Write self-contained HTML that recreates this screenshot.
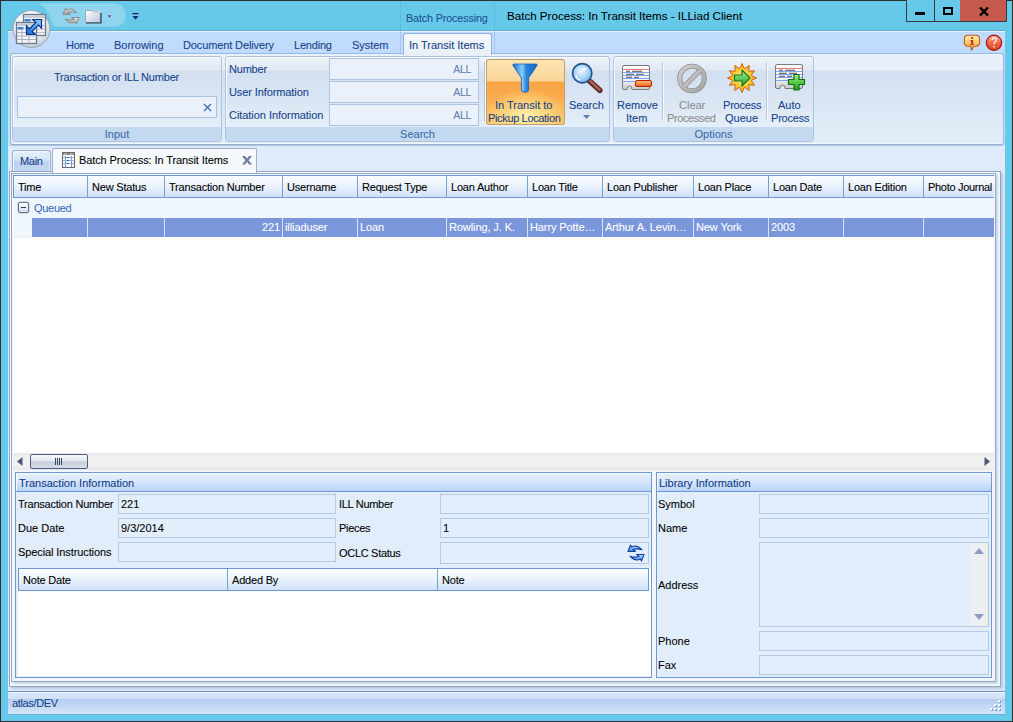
<!DOCTYPE html>
<html><head><meta charset="utf-8">
<style>
*{box-sizing:border-box;margin:0;padding:0}
html,body{width:1013px;height:722px;overflow:hidden}
body{position:relative;background:#67c9ea;font-family:"Liberation Sans",sans-serif;font-size:11px;color:#000;-webkit-text-stroke:0.08px}
.a{position:absolute}
.t{position:absolute;white-space:nowrap;line-height:13px;font-size:11px}
.rb{color:#15428b}
.grp{position:absolute;top:56px;height:86px;border:1px solid #adc3df;border-radius:3px;background:linear-gradient(#eef3f9 0,#dfe8f3 13px,#d3e0f0 14px,#dae6f4 45px,#e6eff9 70px);box-shadow:inset 1px 1px 0 rgba(255,255,255,0.75)}
.glab{position:absolute;left:0;right:0;bottom:0;height:14px;background:#c3d9f0;border-radius:0 0 2px 2px;color:#3e6aaa;text-align:center;line-height:15px;font-size:11px}
.sbox{position:absolute;left:328px;width:150px;height:22px;border:1px solid #adc3df;background:#eaf1fa}
.sall{position:absolute;right:7px;top:4px;color:#5f7fb2;font-size:10.5px;line-height:13px;letter-spacing:-0.3px}
.sep{position:absolute;width:1px;background:#b3c7df;box-shadow:1px 0 0 #f7fafd}
.hdr{position:absolute;height:23px;border:1px solid #6f98d0;border-right:none;background:linear-gradient(#fafcff 0,#ecf3fd 45%,#cfe1fa 100%)}
.hc{position:absolute;top:0;height:21px;border-right:1px solid #76a0d6;line-height:23px;padding-left:4px;font-size:11px;white-space:nowrap;overflow:hidden;letter-spacing:-0.2px}
.cell{position:absolute;top:0;height:19px;border-right:1px solid #d9e2f6;line-height:19px;padding-left:2px;color:#fff;font-size:11px;white-space:nowrap;overflow:hidden;letter-spacing:-0.1px}
.fld{position:absolute;height:20px;border:1px solid #b5c9e4;background:#e3eefc;line-height:18px;padding-left:2px;font-size:11px}
.lab{position:absolute;font-size:11px;line-height:13px;white-space:nowrap}
</style></head><body>
<!-- outer dark border -->
<div class="a" style="left:0;top:0;width:1013px;height:722px;border:1px solid #2e2e2e"></div>

<!-- title bar pill -->
<svg class="a" style="left:30px;top:2px" width="100" height="27" viewBox="0 0 100 27">
 <path d="M10 1.5 H83 Q95.5 1.5 95.5 13.5 Q95.5 24.5 83 24.5 H27 Q23 24.5 22 20 Q18 6 10 1.5Z" fill="#8fd5ee" stroke="#86d0ea" stroke-width="1"/>
</svg>
<svg class="a" style="left:55px;top:3px" width="26" height="24" viewBox="0 0 26 24">
 <defs><linearGradient id="rg1" x1="0" y1="0" x2="0" y2="1"><stop offset="0" stop-color="#e6e6e6"/><stop offset="1" stop-color="#9a9a9a"/></linearGradient></defs>
 <path d="M8 11.5 L10.5 5 L11.5 7 Q17 4 22 9.8 Q17 8 12.8 9.6 L15.5 11.5 Z" fill="url(#rg1)" stroke="#8c8c8c" stroke-width="1" stroke-linejoin="round"/>
 <path d="M24 14.5 L21.5 21 L20.5 19 Q15 22 10 16.2 Q15 18 19.2 16.4 L16.5 14.5 Z" fill="url(#rg1)" stroke="#8c8c8c" stroke-width="1" stroke-linejoin="round"/>
</svg>
<svg class="a" style="left:85px;top:10px" width="17" height="14" viewBox="0 0 17 14">
 <defs><linearGradient id="fo1" x1="0" y1="0" x2="1" y2="1"><stop offset="0" stop-color="#ffffff"/><stop offset="1" stop-color="#b7c3dc"/></linearGradient></defs>
 <path d="M0.5 0.5 H7.5 L8.5 2.5 H15.5 V12.5 H0.5Z" fill="url(#fo1)" stroke="#8e9ab0" stroke-width="0.8"/>
 <rect x="8" y="0.5" width="7.5" height="2.5" fill="#c9cfd9"/>
 <path d="M1 13 H16 V3" fill="none" stroke="#2b3a55" stroke-width="1.2"/>
</svg>
<svg class="a" style="left:106px;top:14px" width="7" height="6" viewBox="0 0 7 6"><path d="M0.5 0.8 H6.5 L3.5 4.8Z" fill="#4a6aa5" stroke="#e8f4fb" stroke-width="0.6"/></svg>
<svg class="a" style="left:132px;top:12px" width="7" height="9" viewBox="0 0 7 9"><rect x="0.5" y="1" width="6" height="1.6" fill="#102f7a"/><path d="M0.2 3.8 H6.8 L3.5 7.8Z" fill="#102f7a"/><path d="M0 3.2 H7" stroke="#fff" stroke-width="0.6"/></svg>
<div class="t" style="left:406px;top:12px;color:#1f4f92;font-size:10.8px;letter-spacing:-0.15px">Batch Processing</div>
<div class="a" style="left:400px;top:30px;width:95px;height:1px;background:#2a4c5e"></div>
<div class="a" style="left:400px;top:1px;width:1px;height:30px;background:#5bbcdc"></div>
<div class="a" style="left:494px;top:1px;width:1px;height:30px;background:#5bbcdc"></div>
<div class="t" style="left:507px;top:9px;font-size:11.6px;color:#000">Batch Process: In Transit Items - ILLiad Client</div>

<!-- window controls -->
<div class="a" style="left:906px;top:0;width:101px;height:22px;background:#67c9ea;border:1px solid #3a3a3a;border-top:none"></div>
<div class="a" style="left:934px;top:0;width:1px;height:21px;background:#3a3a3a"></div>
<div class="a" style="left:960px;top:0;width:46px;height:21px;background:#c65a4f"></div>
<div class="a" style="left:915px;top:12px;width:10px;height:3px;background:#000"></div>
<div class="a" style="left:943px;top:7px;width:10px;height:8px;border:2px solid #000"></div>
<svg class="a" style="left:979px;top:7px" width="10" height="9" viewBox="0 0 10 9"><path d="M1 0.5 L9 8.5 M9 0.5 L1 8.5" stroke="#000" stroke-width="2.4"/></svg>

<!-- client area -->
<div class="a" style="left:8px;top:30px;width:997px;height:684px;background:#dfebfa"></div>
<!-- tab row -->
<div class="a" style="left:8px;top:30px;width:997px;height:1px;background:#6aaac4"></div>
<div class="a" style="left:8px;top:31px;width:997px;height:1px;background:#e8f2fd"></div>
<div class="a" style="left:8px;top:32px;width:997px;height:21px;background:#c0dbfd"></div>
<div class="a" style="left:400px;top:31px;width:1px;height:22px;background:#a9c7ea"></div>
<div class="a" style="left:494px;top:31px;width:1px;height:22px;background:#a9c7ea"></div>

<div class="t rb" style="left:66px;top:39px;letter-spacing:-0.3px">Home</div>
<div class="t rb" style="left:114px;top:39px;letter-spacing:0px">Borrowing</div>
<div class="t rb" style="left:183px;top:39px;letter-spacing:-0.12px">Document Delivery</div>
<div class="t rb" style="left:294px;top:39px;letter-spacing:-0.2px">Lending</div>
<div class="t rb" style="left:352px;top:39px;letter-spacing:-0.05px">System</div>

<!-- ribbon panel -->
<div class="a" style="left:8px;top:53px;width:997px;height:93px;background:linear-gradient(#c2dbfb,#cde1f9)"></div>
<div class="a" style="left:10px;top:53px;width:994px;height:92px;border:1px solid #94b8e6;border-bottom-color:#98aecd;box-shadow:0 1px 1px rgba(120,150,190,0.35),inset 1px 1px 0 #e9f7fd,inset 0 -1px 0 #eef9fe;border-radius:3px;background:linear-gradient(#e8eff8 0,#e8eff8 16px,#d2e0f1 17px,#e4eefa 100%)"></div>
<!-- active tab -->
<div class="a" style="left:403px;top:33px;width:89px;height:22px;border:1px solid #8db2e3;border-bottom:none;border-radius:3px 3px 0 0;background:linear-gradient(#f6f9fe,#e8eff8)"></div>
<div class="t rb" style="left:409px;top:39px">In Transit Items</div>

<!-- help icons -->
<svg class="a" style="left:963px;top:34px" width="18" height="18" viewBox="0 0 18 18">
 <defs><linearGradient id="ig" x1="0" y1="0" x2="0" y2="1"><stop offset="0" stop-color="#fff0b8"/><stop offset="0.35" stop-color="#fdd27a"/><stop offset="1" stop-color="#f7a035"/></linearGradient></defs>
 <path d="M5 1.2 H12.8 Q16.6 1.2 16.6 5 V8.6 Q16.6 12.3 12.8 12.3 H11.2 L8.3 16.3 L8.1 12.3 H5 Q1.4 12.3 1.4 8.6 V5 Q1.4 1.2 5 1.2Z" fill="url(#ig)" stroke="#c4581c" stroke-width="1.1" stroke-linejoin="round"/>
 <rect x="8.2" y="3" width="2" height="1.9" fill="#b8461a"/>
 <path d="M7.2 6 H10.2 V10.2 H11 V11 H6.8 V10.2 H8 V6.9 H7.2Z" fill="#b8461a"/>
</svg>
<svg class="a" style="left:985px;top:34px" width="18" height="18" viewBox="0 0 18 18">
 <defs><linearGradient id="hg" x1="0" y1="0" x2="0" y2="1"><stop offset="0" stop-color="#fbb6a0"/><stop offset="0.5" stop-color="#f06a48"/><stop offset="1" stop-color="#e2401f"/></linearGradient></defs>
 <circle cx="9" cy="8.8" r="7.6" fill="url(#hg)" stroke="#a8150c" stroke-width="1.2"/>
 <path d="M7 6 Q7.2 3.8 9.3 3.8 Q11.3 3.8 11.3 5.7 Q11.3 7 10 7.9 Q9 8.6 9 10.6" fill="none" stroke="#fff" stroke-width="1.2"/>
 <rect x="8.3" y="12" width="1.4" height="1.5" fill="#fff"/>
</svg>

<!-- ======== RIBBON GROUPS ======== -->
<!-- Input -->
<div class="grp" style="left:12px;width:210px">
  <div class="t rb" style="left:41px;top:14px;letter-spacing:-0.2px">Transaction or ILL Number</div>
  <div class="a" style="left:4px;top:39px;width:200px;height:22px;border:1px solid #a9c2e2;background:#eaf1fb"></div>
  <svg class="a" style="left:190px;top:46px" width="9" height="9" viewBox="0 0 9 9"><path d="M1 1 L8 8 M8 1 L1 8" stroke="#3f6db0" stroke-width="1.4"/></svg>
  <div class="glab">Input</div>
</div>
<!-- Search -->
<div class="grp" style="left:225px;width:385px">
  <div class="t rb" style="left:3px;top:6px;letter-spacing:-0.2px">Number</div>
  <div class="t rb" style="left:3px;top:29px;letter-spacing:-0.1px">User Information</div>
  <div class="t rb" style="left:3px;top:52px;letter-spacing:-0.05px">Citation Information</div>
  <div class="sbox" style="left:103px;top:1px"><span class="sall">ALL</span></div>
  <div class="sbox" style="left:103px;top:24px"><span class="sall">ALL</span></div>
  <div class="sbox" style="left:103px;top:47px"><span class="sall">ALL</span></div>
  <div class="sep" style="left:258px;top:5px;height:59px"></div>
  <div class="glab">Search</div>
</div>
<!-- orange button -->
<div class="a" style="left:486px;top:59px;width:79px;height:66px;border:1px solid #c2a068;border-top-color:#b89a6a;border-radius:3px;background:radial-gradient(ellipse 55% 60% at 50% 78%,rgba(255,240,175,1) 0%,rgba(255,225,140,0.75) 45%,rgba(255,210,120,0) 100%) 0 21px/100% 45px no-repeat,linear-gradient(#fde4b2 0,#fad59a 21px,#f8a443 22px,#f9ae50 40px,#fbc46a 100%)"></div>
<div class="t rb" style="left:495px;top:99px">In Transit to</div>
<div class="t rb" style="left:488px;top:112px;letter-spacing:-0.35px">Pickup Location</div>
<svg class="a" style="left:512px;top:63px" width="27" height="30" viewBox="0 0 27 30">
 <defs><linearGradient id="fg" x1="0" y1="0" x2="1" y2="0"><stop offset="0" stop-color="#1566cc"/><stop offset="0.38" stop-color="#8ccff9"/><stop offset="0.55" stop-color="#2c86de"/><stop offset="1" stop-color="#1463c6"/></linearGradient></defs>
 <path d="M2 1 H24 Q25.8 1 24.9 2.7 L16.6 15 V27 Q16.6 29.2 13 29.2 Q9.4 29.2 9.4 27 V15 L1.1 2.7 Q0.2 1 2 1Z" fill="url(#fg)" stroke="#1660c0" stroke-width="0.8"/>
</svg>
<!-- search magnifier -->
<svg class="a" style="left:571px;top:62px" width="33" height="32" viewBox="0 0 33 32">
 <defs><radialGradient id="mg" cx="0.45" cy="0.4" r="0.65"><stop offset="0" stop-color="#eef8ff"/><stop offset="0.55" stop-color="#a9d4f6"/><stop offset="1" stop-color="#6aaee8"/></radialGradient></defs>
 <path d="M18 18.5 L28.8 28.3" stroke="#5e2620" stroke-width="5.6" stroke-linecap="round"/>
 <path d="M18.3 18.3 L28.5 27.6" stroke="#a8625a" stroke-width="2.6" stroke-linecap="round"/>
 <circle cx="11.2" cy="11.2" r="9.6" fill="url(#mg)" stroke="#22548e" stroke-width="1.7"/>
 <path d="M5 13.5 Q5.5 17 9 17.8" fill="none" stroke="#ffffff" stroke-width="1.3" stroke-linecap="round"/>
 <ellipse cx="13.5" cy="7" rx="2.2" ry="1.3" fill="#ffffff" opacity="0.85"/>
</svg>
<div class="t rb" style="left:569px;top:99px">Search</div>
<svg class="a" style="left:583px;top:115px" width="7" height="4" viewBox="0 0 7 4"><path d="M0 0 H7 L3.5 4Z" fill="#5a7fb5"/></svg>

<!-- Options -->
<div class="grp" style="left:613px;width:201px">
  <div class="sep" style="left:48px;top:5px;height:59px"></div>
  <div class="sep" style="left:152px;top:5px;height:59px"></div>
  <div class="glab">Options</div>
</div>
<!-- option icons -->
<svg class="a" style="left:622px;top:65px" width="31" height="26" viewBox="0 0 31 26">
 <defs><linearGradient id="cg1" x1="0" y1="0" x2="0" y2="1"><stop offset="0" stop-color="#ffffff"/><stop offset="0.6" stop-color="#f3f3f3"/><stop offset="1" stop-color="#c9c9c9"/></linearGradient></defs>
 <path d="M2 0.5 H26 Q27.5 0.5 27.5 2 V23 Q27.5 24.5 26 24.5 H10 Q10 21 7.5 21 Q5 21 5 24.5 H2 Q0.5 24.5 0.5 23 V2 Q0.5 0.5 2 0.5Z" fill="url(#cg1)" stroke="#7b7b7b" stroke-width="1"/>
 <path d="M1 4.5 H27" stroke="#f0787a" stroke-width="1"/>
 <path d="M1 7.5 H27 M1 10.5 H27 M1 13.5 H27 M1 16.5 H20" stroke="#7aa7ef" stroke-width="1"/>
 <path d="M4 6.3 H8 M10 6.3 H20 M4 9.3 H12 M14 9.3 H22 M4 12.3 H10 M12 12.3 H17" stroke="#4f4f4f" stroke-width="1.1"/>

 <defs><linearGradient id="og1" x1="0" y1="0" x2="0" y2="1"><stop offset="0" stop-color="#ffc27a"/><stop offset="1" stop-color="#ee5f16"/></linearGradient></defs>
 <rect x="13.5" y="15.5" width="16" height="6" rx="1.5" fill="url(#og1)" stroke="#b3200c" stroke-width="1"/>
</svg>
<svg class="a" style="left:676px;top:62px" width="32" height="32" viewBox="0 0 32 32">
 <defs><linearGradient id="cl1" x1="0" y1="0" x2="1" y2="1"><stop offset="0" stop-color="#cfcfcf"/><stop offset="1" stop-color="#a4a4a4"/></linearGradient></defs>
 <circle cx="16" cy="16.5" r="12.3" fill="none" stroke="#8f8f8f" stroke-width="5"/>
 <circle cx="16" cy="16.5" r="12.3" fill="none" stroke="url(#cl1)" stroke-width="3.4"/>
 <path d="M24.2 8.3 L7.8 24.7" stroke="#8f8f8f" stroke-width="5"/>
 <path d="M24.2 8.3 L7.8 24.7" stroke="#bdbdbd" stroke-width="3.4"/>
</svg>
<svg class="a" style="left:727px;top:63px" width="30" height="30" viewBox="0 0 30 30">
 <defs><radialGradient id="st1" cx="0.5" cy="0.5" r="0.55"><stop offset="0" stop-color="#fff3a0"/><stop offset="0.6" stop-color="#fdc52c"/><stop offset="1" stop-color="#f28a12"/></radialGradient>
 <linearGradient id="gr1" x1="0" y1="0" x2="0" y2="1"><stop offset="0" stop-color="#a6f29a"/><stop offset="1" stop-color="#22a322"/></linearGradient></defs>
 <polygon points="15.00,0.50 17.46,5.82 22.25,2.44 21.72,8.28 27.56,7.75 24.18,12.54 29.50,15.00 24.18,17.46 27.56,22.25 21.72,21.72 22.25,27.56 17.46,24.18 15.00,29.50 12.54,24.18 7.75,27.56 8.28,21.72 2.44,22.25 5.82,17.46 0.50,15.00 5.82,12.54 2.44,7.75 8.28,8.28 7.75,2.44 12.54,5.82" fill="url(#st1)" stroke="#d0661c" stroke-width="1"/>
 <path d="M7.5 12 H15 V7 L23 15 L15 23 V18 H7.5Z" fill="url(#gr1)" stroke="#137a13" stroke-width="1.2" stroke-linejoin="round"/>
</svg>
<svg class="a" style="left:775px;top:64px" width="32" height="28" viewBox="0 0 32 28">
 <defs><linearGradient id="cg2" x1="0" y1="0" x2="0" y2="1"><stop offset="0" stop-color="#ffffff"/><stop offset="0.6" stop-color="#f3f3f3"/><stop offset="1" stop-color="#c9c9c9"/></linearGradient></defs>
 <path d="M2 0.5 H26 Q27.5 0.5 27.5 2 V23 Q27.5 24.5 26 24.5 H10 Q10 21 7.5 21 Q5 21 5 24.5 H2 Q0.5 24.5 0.5 23 V2 Q0.5 0.5 2 0.5Z" fill="url(#cg2)" stroke="#7b7b7b" stroke-width="1"/>
 <path d="M1 4.5 H27" stroke="#f0787a" stroke-width="1"/>
 <path d="M1 7.5 H27 M1 10.5 H27 M1 13.5 H27 M1 16.5 H20" stroke="#7aa7ef" stroke-width="1"/>
 <path d="M4 6.3 H8 M10 6.3 H20 M4 9.3 H12 M14 9.3 H22 M4 12.3 H10 M12 12.3 H17" stroke="#4f4f4f" stroke-width="1.1"/>

 <defs><linearGradient id="pl1" x1="0" y1="0" x2="0" y2="1"><stop offset="0" stop-color="#9af07f"/><stop offset="1" stop-color="#16a316"/></linearGradient></defs>
 <path d="M19 10.5 H24 V15.5 H29.5 V20.5 H24 V26 H19 V20.5 H13.5 V15.5 H19Z" fill="url(#pl1)" stroke="#0f6d0f" stroke-width="1.2" stroke-linejoin="round"/>
</svg>
<div class="t rb" style="left:617px;top:99px">Remove</div>
<div class="t rb" style="left:626px;top:112px">Item</div>
<div class="t" style="left:679px;top:99px;color:#8d8d8d">Clear</div>
<div class="t" style="left:667px;top:112px;color:#8d8d8d;letter-spacing:-0.4px">Processed</div>
<div class="t rb" style="left:723px;top:99px;letter-spacing:-0.2px">Process</div>
<div class="t rb" style="left:725px;top:112px">Queue</div>
<div class="t rb" style="left:778px;top:99px">Auto</div>
<div class="t rb" style="left:771px;top:112px;letter-spacing:-0.2px">Process</div>

<!-- ======== DOCUMENT TABS ======== -->
<div class="a" style="left:12px;top:150px;width:39px;height:22px;border:1px solid #98b0d3;border-bottom:none;border-radius:3px 3px 0 0;background:linear-gradient(#e9f1fb 0,#d5e4f6 40%,#bad0ee 55%,#c7daf3 100%);box-shadow:inset 1px 1px 0 #f3f7fd,inset -1px 0 0 #e3ecf8"></div>
<div class="t rb" style="left:20px;top:155px;letter-spacing:-0.3px">Main</div>
<!-- outer frames -->
<div class="a" style="left:9px;top:171px;width:992px;height:516px;border:1px solid #93a6c4;background:#f5f9fe;box-shadow:2px 2px 2px rgba(150,175,210,0.55)"></div>
<div class="a" style="left:11px;top:173px;width:985px;height:509px;border:1px solid #95a8c6;background:#f1f6fd;box-shadow:2px 2px 2px #c8d5e8"></div>
<!-- active doc tab -->
<div class="a" style="left:52px;top:148px;width:205px;height:25px;border:1px solid #9fb1cb;border-bottom:none;border-radius:2px 2px 0 0;background:#f5f9fe"></div>
<svg class="a" style="left:62px;top:152px" width="13" height="16" viewBox="0 0 13 16">
 <rect x="0.5" y="0.5" width="12" height="15" fill="#fbfbfb" stroke="#6b6b6b"/>
 <rect x="1" y="1" width="11" height="2" fill="#8a8a8a"/>
 <path d="M2 2H5M8 2H11" stroke="#e6e6e6" stroke-width="0.8"/>
 <path d="M1 5.5H12M1 8.5H12M1 11.5H12" stroke="#8fb8ec" stroke-width="1" stroke-dasharray="2 1"/>
 <path d="M3.5 4V15M9.5 4V15" stroke="#6aa0e0" stroke-width="1"/>
 <path d="M5 5.5H7M5 8.5H7M5 11.5H7" stroke="#4a5a70" stroke-width="1"/>
</svg>
<div class="t" style="left:79px;top:154px;font-size:11px;letter-spacing:-0.1px">Batch Process: In Transit Items</div>
<svg class="a" style="left:242px;top:156px" width="10" height="9" viewBox="0 0 10 9"><path d="M0 0 H3 L5 2.6 L7 0 H10 L6.6 4.2 L10 8.5 H7 L5 5.8 L3 8.5 H0 L3.4 4.2Z" fill="#6f7e98"/></svg>

<!-- ======== GRID ======== -->
<div class="a" style="left:13px;top:175px;width:981px;height:278px;background:#fff"></div>
<div class="hdr" style="left:13px;top:175px;width:981px">
  <div class="hc" style="left:0;width:74px">Time</div>
  <div class="hc" style="left:74px;width:77px">New Status</div>
  <div class="hc" style="left:151px;width:118px">Transaction Number</div>
  <div class="hc" style="left:269px;width:75px">Username</div>
  <div class="hc" style="left:344px;width:89px">Request Type</div>
  <div class="hc" style="left:433px;width:81px">Loan Author</div>
  <div class="hc" style="left:514px;width:75px">Loan Title</div>
  <div class="hc" style="left:589px;width:91px">Loan Publisher</div>
  <div class="hc" style="left:680px;width:75px">Loan Place</div>
  <div class="hc" style="left:755px;width:75px">Loan Date</div>
  <div class="hc" style="left:830px;width:80px">Loan Edition</div>
  <div class="hc" style="left:910px;width:70px;border-right:none;overflow:visible;letter-spacing:-0.3px">Photo Journal</div>
</div>
<!-- group row -->
<div class="a" style="left:13px;top:198px;width:981px;height:20px;background:#f0f6fe"></div>
<div class="a" style="left:13px;top:218px;width:19px;height:19px;background:#f0f6fe"></div>
<div class="a" style="left:18px;top:202px;width:11px;height:11px;border:1px solid #637288;border-radius:2px;background:linear-gradient(#ffffff,#d3ddec);box-shadow:0 0 0 0.5px #b9c3d2"></div>
<div class="a" style="left:21px;top:207px;width:5px;height:1px;background:#2d3a4f"></div>
<div class="t" style="left:34px;top:202px;color:#3a6cc2;letter-spacing:-0.3px">Queued</div>
<!-- selected row -->
<div class="a" style="left:32px;top:218px;width:962px;height:19px;background:#7b97dc">
  <div class="cell" style="left:0;width:56px"></div>
  <div class="cell" style="left:56px;width:77px"></div>
  <div class="cell" style="left:133px;width:118px;text-align:right;padding-right:2px">221</div>
  <div class="cell" style="left:251px;width:75px">illiaduser</div>
  <div class="cell" style="left:326px;width:89px">Loan</div>
  <div class="cell" style="left:415px;width:81px">Rowling, J. K.</div>
  <div class="cell" style="left:496px;width:75px">Harry Potte…</div>
  <div class="cell" style="left:571px;width:91px">Arthur A. Levin…</div>
  <div class="cell" style="left:662px;width:75px">New York</div>
  <div class="cell" style="left:737px;width:75px">2003</div>
  <div class="cell" style="left:812px;width:80px"></div>
  <div class="cell" style="left:892px;width:70px;border-right:none"></div>
</div>
<div class="a" style="left:13px;top:237px;width:19px;height:1px;background:#e3edfb"></div>
<!-- h scrollbar -->
<div class="a" style="left:13px;top:453px;width:981px;height:17px;background:linear-gradient(#e9e9e9,#f0f0f0 20%,#f0f0f0 80%,#e6e6e6);border-top:1px solid #e2e6ec"></div>
<svg class="a" style="left:17px;top:457px" width="6" height="9" viewBox="0 0 6 9"><path d="M5.5 0 V9 L0 4.5Z" fill="#4d5a78"/></svg>
<svg class="a" style="left:984px;top:457px" width="6" height="9" viewBox="0 0 6 9"><path d="M0.5 0 V9 L6 4.5Z" fill="#4d5a78"/></svg>
<div class="a" style="left:30px;top:454px;width:58px;height:15px;border:1px solid #4f5f80;border-radius:2px;background:linear-gradient(#f6f8fb 0,#e2e7ef 45%,#c6cfdc 55%,#d8dee8 100%)"></div>
<div class="a" style="left:55px;top:458px;width:7px;height:7px;border-left:1px solid #3c465a;border-right:1px solid #3c465a"><div class="a" style="left:1px;top:0;width:3px;height:7px;border-left:1px solid #3c465a;border-right:1px solid #3c465a"></div></div>

<!-- ======== TRANSACTION INFO PANEL ======== -->
<div class="a" style="left:15px;top:472px;width:637px;height:206px;border:1px solid #6f98d0;background:#e2edfc"></div>
<div class="a" style="left:16px;top:473px;width:635px;height:19px;border-bottom:1px solid #6f98d0;background:linear-gradient(#e8f1fd 0,#d6e6fc 50%,#b8d3f8 100%);box-shadow:inset 1px 1px 0 #f6faff"></div>
<div class="t" style="left:19px;top:477px;color:#0f3a85">Transaction Information</div>
<div class="lab" style="left:18px;top:498px;letter-spacing:-0.22px">Transaction Number</div>
<div class="lab" style="left:18px;top:522px">Due Date</div>
<div class="lab" style="left:18px;top:546px;letter-spacing:-0.1px">Special Instructions</div>
<div class="fld" style="left:118px;top:494px;width:218px">221</div>
<div class="fld" style="left:118px;top:518px;width:218px">9/3/2014</div>
<div class="fld" style="left:118px;top:542px;width:218px"></div>
<div class="lab" style="left:339px;top:498px;letter-spacing:-0.3px">ILL Number</div>
<div class="lab" style="left:339px;top:522px;letter-spacing:-0.3px">Pieces</div>
<div class="lab" style="left:339px;top:547px;letter-spacing:-0.3px">OCLC Status</div>
<div class="fld" style="left:440px;top:494px;width:209px"></div>
<div class="fld" style="left:440px;top:518px;width:209px">1</div>
<div class="fld" style="left:440px;top:542px;width:209px;height:22px"></div>
<svg class="a" style="left:620px;top:540px" width="32" height="26" viewBox="0 0 32 26">
 <defs><linearGradient id="rf1" x1="0" y1="0" x2="0" y2="1"><stop offset="0" stop-color="#bfe2fb"/><stop offset="1" stop-color="#3b8ae0"/></linearGradient></defs>
 <path d="M8 11.5 L10.5 5 L11.5 7 Q17 4 22 9.8 Q17 8 12.8 9.6 L15.5 11.5 Z" fill="url(#rf1)" stroke="#0f3fa8" stroke-width="1.1" stroke-linejoin="round"/>
 <path d="M24 14.5 L21.5 21 L20.5 19 Q15 22 10 16.2 Q15 18 19.2 16.4 L16.5 14.5 Z" fill="url(#rf1)" stroke="#0f3fa8" stroke-width="1.1" stroke-linejoin="round"/>
</svg>
<!-- note grid -->
<div class="a" style="left:18px;top:568px;width:633px;height:108px;background:#fff"></div>
<div class="hdr" style="left:18px;top:568px;width:631px;border-right:1px solid #6f98d0;border-left:1px solid #6f98d0">
  <div class="hc" style="left:0;width:209px">Note Date</div>
  <div class="hc" style="left:209px;width:210px">Added By</div>
  <div class="hc" style="left:419px;width:211px;border-right:none">Note</div>
</div>

<!-- ======== LIBRARY INFO PANEL ======== -->
<div class="a" style="left:656px;top:472px;width:336px;height:206px;border:1px solid #6f98d0;background:#e2edfc"></div>
<div class="a" style="left:657px;top:473px;width:334px;height:19px;border-bottom:1px solid #6f98d0;background:linear-gradient(#e8f1fd 0,#d6e6fc 50%,#b8d3f8 100%);box-shadow:inset 1px 1px 0 #f6faff"></div>
<div class="t" style="left:659px;top:477px;color:#0f3a85">Library Information</div>
<div class="lab" style="left:658px;top:498px">Symbol</div>
<div class="lab" style="left:658px;top:522px">Name</div>
<div class="lab" style="left:658px;top:579px">Address</div>
<div class="lab" style="left:658px;top:635px">Phone</div>
<div class="lab" style="left:658px;top:659px">Fax</div>
<div class="fld" style="left:759px;top:494px;width:230px"></div>
<div class="fld" style="left:759px;top:518px;width:230px"></div>
<div class="fld" style="left:759px;top:542px;width:230px;height:85px"></div>
<div class="a" style="left:970px;top:543px;width:18px;height:83px;background:#eeeff1"></div>
<svg class="a" style="left:974px;top:548px" width="10" height="6" viewBox="0 0 10 6"><path d="M0 6 H10 L5 0Z" fill="#8e9cc0"/></svg>
<svg class="a" style="left:974px;top:614px" width="10" height="6" viewBox="0 0 10 6"><path d="M0 0 H10 L5 6Z" fill="#8e9cc0"/></svg>
<div class="fld" style="left:759px;top:631px;width:230px"></div>
<div class="fld" style="left:759px;top:655px;width:230px"></div>

<!-- status bar -->
<div class="a" style="left:8px;top:691px;width:997px;height:1px;background:#6b8fc7"></div>
<div class="a" style="left:8px;top:692px;width:997px;height:22px;background:linear-gradient(#f4f8fe 0,#f4f8fe 1px,#d9e7f9 1px,#cfe0f6 7px,#b3cdf1 7px,#d6e5f8 100%)"></div>
<div class="a" style="left:8px;top:714px;width:997px;height:1px;background:#62b3d2"></div>
<div class="t rb" style="left:12px;top:697px;letter-spacing:-0.35px">atlas/DEV</div>
<svg class="a" style="left:989px;top:699px" width="13" height="13" viewBox="0 0 13 13">
 <g fill="#7b98c4"><rect x="10" y="2" width="2" height="2"/><rect x="10" y="6" width="2" height="2"/><rect x="6" y="6" width="2" height="2"/><rect x="10" y="10" width="2" height="2"/><rect x="6" y="10" width="2" height="2"/><rect x="2" y="10" width="2" height="2"/></g>
 <g fill="#ffffff"><rect x="9" y="1" width="2" height="2"/><rect x="9" y="5" width="2" height="2"/><rect x="5" y="5" width="2" height="2"/><rect x="9" y="9" width="2" height="2"/><rect x="5" y="9" width="2" height="2"/><rect x="1" y="9" width="2" height="2"/></g>
</svg>

<!-- ORB (on top) -->
<svg class="a" style="left:11px;top:9px" width="41" height="41" viewBox="0 0 41 41">
 <defs>
  <radialGradient id="ob" cx="0.45" cy="0.3" r="0.75"><stop offset="0" stop-color="#ffffff"/><stop offset="0.55" stop-color="#eef1f5"/><stop offset="0.85" stop-color="#cfd6de"/><stop offset="1" stop-color="#aab4bf"/></radialGradient>
  <linearGradient id="ar" x1="0" y1="1" x2="1" y2="0"><stop offset="0" stop-color="#1463c8"/><stop offset="0.5" stop-color="#4ea5f0"/><stop offset="1" stop-color="#8fcaf8"/></linearGradient>
 </defs>
 <circle cx="20.5" cy="20" r="18.5" fill="url(#ob)" stroke="#9aa6b3" stroke-width="1"/>
 <!-- back window -->
 <rect x="12.5" y="5.5" width="22" height="21" fill="#f3f5f8" stroke="#6f7b8b" stroke-width="1.3"/>
 <rect x="13" y="6" width="21" height="3" fill="#c6ccd6"/>
 <rect x="13.5" y="10" width="6" height="2.5" fill="#3f7fcb"/><path d="M20 11.2H33" stroke="#b9c2ce" stroke-width="1"/>
 <path d="M13 16.5H34M13 20H34M13 23.5H34" stroke="#aab2be" stroke-width="0.8"/>
 <!-- front window -->
 <rect x="5.5" y="13.5" width="20" height="21" fill="#f3f5f8" stroke="#6f7b8b" stroke-width="1.3"/>
 <rect x="6" y="14" width="19" height="3" fill="#c6ccd6"/>
 <rect x="6.5" y="18" width="6" height="2.5" fill="#3f7fcb"/><path d="M13 19.2H24.5" stroke="#b9c2ce" stroke-width="1"/>
 <path d="M6 23.5H25M6 27H25M6 30.5H25M11 20.5V34M18 20.5V34" stroke="#a3acb9" stroke-width="0.9"/>
 <!-- arrow -->
 <path d="M15.5 25.5 L15.5 16.7 L16.6 17.8 L18.5 19.8 L24.8 13.6 L21.7 10.5 L30.5 10.5 L30.5 19.3 L27.4 16.2 L21.2 22.4 L24.3 25.5Z" fill="url(#ar)" stroke="#0b2f8a" stroke-width="1.2" stroke-linejoin="miter"/>
</svg>
</body></html>
